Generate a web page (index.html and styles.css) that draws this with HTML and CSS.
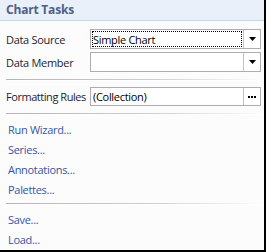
FILE: index.html
```html
<!DOCTYPE html>
<html lang="en">

<head>
    <meta charset="UTF-8">
    <title>Chart Tasks</title>
    <link rel="stylesheet" href="styles.css">
</head>

<body>
    <div class="panel">
        <div class="header">Chart Tasks</div>
        <div class="content">
            <div class="field">
                <span class="label">Data Source</span>
                <div class="combo">
                    <div class="value"><span class="focus">Simple Chart</span></div>
                    <div class="drop">
                        <svg width="7" height="4" viewBox="0 0 7 4"><polygon points="0,0 7,0 3.5,4" fill="#000"/></svg>
                    </div>
                </div>
            </div>
            <div class="field">
                <span class="label">Data Member</span>
                <div class="combo">
                    <div class="value"></div>
                    <div class="drop">
                        <svg width="7" height="4" viewBox="0 0 7 4"><polygon points="0,0 7,0 3.5,4" fill="#000"/></svg>
                    </div>
                </div>
            </div>

            <div class="sep upper"></div>

            <div class="field short">
                <span class="label">Formatting Rules</span>
                <div class="combo">
                    <div class="value">(Collection)</div>
                    <div class="drop">
                        <svg width="8" height="2" viewBox="0 0 8 2"><rect x="0" y="0" width="2" height="2" fill="#000"/><rect x="3" y="0" width="2" height="2" fill="#000"/><rect x="6" y="0" width="2" height="2" fill="#000"/></svg>
                    </div>
                </div>
            </div>

            <div class="sep"></div>

            <div class="links first">
                <a href="#">Run Wizard...</a>
                <a href="#">Series...</a>
                <a href="#">Annotations...</a>
                <a href="#">Palettes...</a>
            </div>

            <div class="sep tight"></div>

            <div class="links">
                <a href="#">Save...</a>
                <a href="#">Load...</a>
            </div>
        </div>
    </div>
</body>

</html>
```

FILE: styles.css
```css
body {
    margin: 0;
    font-family: "Open Sans", "Noto Sans", sans-serif;
    font-size: 11px;
    letter-spacing: -0.3px;
    background-color: #fcfcfc;
}

.panel {
    width: 264px;
    height: 250px;
    border-right: 2px solid #000;
    border-bottom: 2px solid #000;
    background-color: #fcfcfc;
    overflow: hidden;
}

.header {
    height: 20px;
    line-height: 20px;
    padding-left: 6px;
    background-color: #e9f0f9;
    border-bottom: 1px solid #c5d5ea;
    font-size: 12px;
    font-weight: bold;
    letter-spacing: -0.2px;
    color: #4d6189;
}

.content {
    padding: 8px 3px 0 6px;
}

.field {
    display: flex;
    align-items: center;
    height: 20px;
}

.field + .field {
    margin-top: 3px;
}

.field.short {
    height: 19px;
}

.label {
    width: 84px;
    color: #1c1c30;
    white-space: nowrap;
}

.short .label {
    letter-spacing: -0.45px;
}

.combo {
    flex: 1;
    display: flex;
    height: 100%;
    box-sizing: border-box;
    border: 1px solid #abadb3;
    background-color: #fff;
}

.value {
    flex: 1;
    display: flex;
    align-items: center;
    padding: 1px 1px 1px 2px;
    color: #000;
    white-space: nowrap;
}

.focus {
    flex: 1;
    align-self: stretch;
    display: flex;
    align-items: center;
    margin-left: -1px;
    padding-left: 1px;
    outline: 1px dotted #000;
    outline-offset: -1px;
}

.drop {
    width: 16px;
    display: flex;
    align-items: center;
    justify-content: center;
    border-left: 1px solid #c4c4c4;
}

.sep {
    height: 1px;
    margin: 7px 0 7px 0;
    background: linear-gradient(to right, #b4b4b4, #d0d0d0 60%, rgba(220, 220, 220, 0));
    border-bottom: 1px solid #fff;
}

.sep.upper {
    margin-bottom: 6px;
}

.sep.tight {
    margin: 3px 0 5px 0;
}

.links {
    display: flex;
    flex-direction: column;
    padding-left: 2px;
}

.links.first {
    margin-top: -2px;
}

.links a {
    line-height: 20px;
    height: 20px;
    color: #3455a6;
    text-decoration: none;
}
```
